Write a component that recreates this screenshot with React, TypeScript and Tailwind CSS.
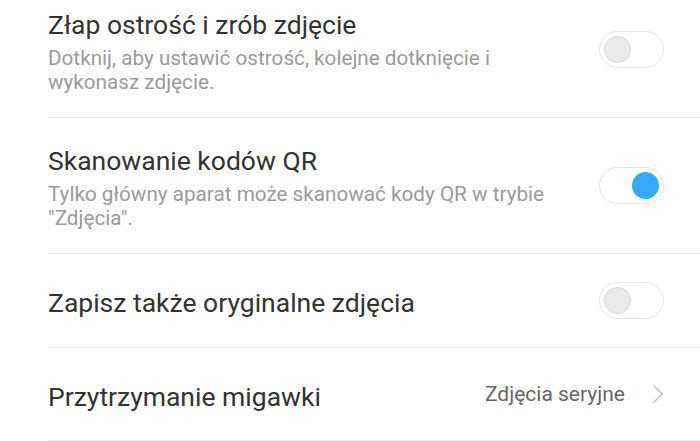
import React from 'react';

type Row =
  | { kind: 'toggle'; title: string; desc?: string; on: boolean }
  | { kind: 'link'; title: string; value: string };

const rows: Row[] = [
  {
    kind: 'toggle',
    title: 'Złap ostrość i zrób zdjęcie',
    desc: 'Dotknij, aby ustawić ostrość, kolejne dotknięcie i wykonasz zdjęcie.',
    on: false,
  },
  {
    kind: 'toggle',
    title: 'Skanowanie kodów QR',
    desc: 'Tylko główny aparat może skanować kody QR w trybie "Zdjęcia".',
    on: true,
  },
  { kind: 'toggle', title: 'Zapisz także oryginalne zdjęcia', on: false },
  { kind: 'link', title: 'Przytrzymanie migawki', value: 'Zdjęcia seryjne' },
];

function Toggle({ on }: { on: boolean }) {
  return (
    <div
      className={`flex h-[37px] w-[65px] shrink-0 items-center rounded-full border border-[#e4e4e4] bg-white p-[4px] ${
        on ? 'justify-end' : 'justify-start'
      }`}
    >
      {on ? (
        <div className="h-[27px] w-[27px] rounded-full bg-[#36a9fa]" />
      ) : (
        <div className="h-[27px] w-[27px] rounded-full border border-[#d8d8d8] bg-[#ebebeb]" />
      )}
    </div>
  );
}

function Chevron() {
  return (
    <svg width="12" height="20" viewBox="0 0 12 20" fill="none">
      <path d="M1.5 1.5 L10.5 10 L1.5 18.5" stroke="#bdbdbd" strokeWidth="1.4" strokeLinejoin="round" />
    </svg>
  );
}

export default function App() {
  return (
    <div className="h-[441px] w-[700px] overflow-hidden bg-white font-['Roboto',sans-serif]">
      {/* lista jest przewinięta o 18px */}
      <div className="-mt-[18px]">
        {rows.map((row, i) => {
          const single = row.kind === 'link' || !row.desc;
          const height = single ? (i === rows.length - 1 ? 'h-[93px]' : 'h-[94px]') : 'h-[136px]';
          return (
            <div
              key={row.title}
              className={`ml-[48px] flex items-center justify-between border-b border-[#ebebeb] pr-[36px] ${height}`}
            >
              <div className={`max-w-[525px] ${single ? 'pt-[5px]' : 'pt-[4px]'}`}>
                <div className="text-[26.5px] leading-[32px] text-[#333333]">{row.title}</div>
                {row.kind === 'toggle' && row.desc && (
                  <div className="mt-[5px] text-[20.7px] leading-[24px] text-[#9b9b9b]">{row.desc}</div>
                )}
              </div>
              {row.kind === 'toggle' ? (
                <Toggle on={row.on} />
              ) : (
                <div className="flex items-center gap-[27px]">
                  <span className="text-[21px] leading-[32px] text-[#666666]">{row.value}</span>
                  <Chevron />
                </div>
              )}
            </div>
          );
        })}
      </div>
    </div>
  );
}
